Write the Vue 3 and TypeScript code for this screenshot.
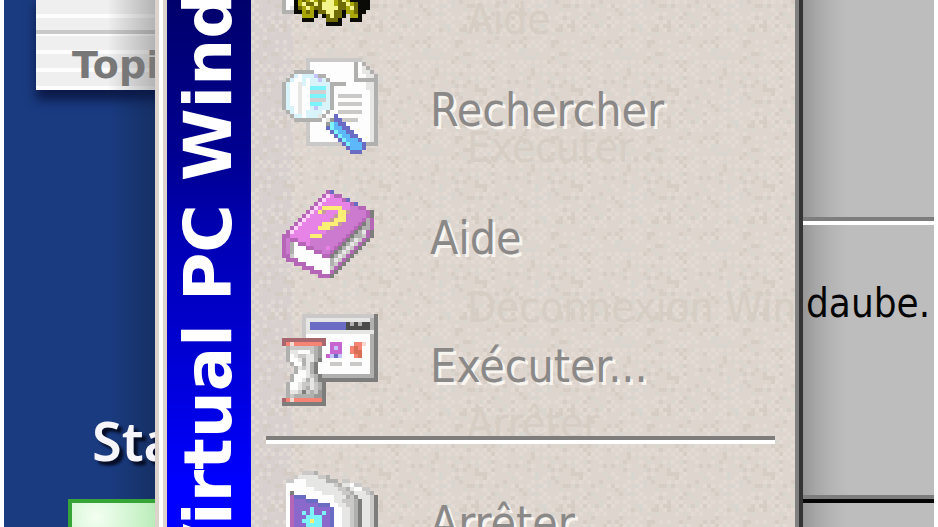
<script setup lang="ts">
interface Cell { x: number; y: number; w: number; fill: string }
interface Entry { label: string; cells: Cell[] }

const palette: Record<string, string> = {
  w: '#fdfdfd', l: '#e6e6e4', s: '#cbc9c7', g: '#b0b0ae', G: '#989896', D: '#7d7d7b', k: '#4c4c4c', K: '#0a0a06',
  c: '#d9f3fb', t: '#7df4fb', d: '#d0d0d0', p: '#c4c4fa', b: '#5cb8fa', B: '#6a6cc4', n: '#c49a9c',
  P: '#b666b6', m: '#e783e7', M: '#cb7acf', W: '#fbd3fb', y: '#fdee74', R: '#a8666e', o: '#f58474', e: '#fbd8d0',
  v: '#c765d0', x: '#d96f52', u: '#8a68cc', z: '#6f6b06', Z: '#a9a607', Y: '#f4f48c',
}

function paint(rows: string[], top = 0): Cell[] {
  const cells: Cell[] = []
  rows.forEach((row, r) => {
    let c = 0
    while (c < row.length) {
      let end = c + 1
      while (end < row.length && row[end] === row[c]) end++
      const fill = palette[row[c]]
      if (fill) cells.push({ x: c, y: r + top, w: end - c, fill })
      c = end
    }
  })
  return cells
}

const gear = paint([
  'gwwKZzZYZzZYYZzYZKKKKK..',
  'gwwKZYzzYzYYYZzzYZzKKK..',
  'gwlKzZYZzzYYYYzzZYzKKK..',
  'gggKKZzZKzzYYzzKZZzKK...',
  '.....ZZZK.KzYzzK.ZZK....',
  '.....KKK...zzzK..KKK....',
  '...........KKKK.........',
], 17)

const search = paint([
  '......ssssssssssssss....',
  '......swwwwwwwwwwwgwg...',
  '......swwwwwwwwwwwgwlg..',
  '...gggggwwwwwwwwwwgwllg.',
  '..gcwcccpggwwwwwwwgwwllg',
  '.gcwwcwccpcgwwwwwwgggggg',
  'gcwwlcwcccccggggwwwwwllg',
  'gcwwlwwttttcgwwwwwwwwllg',
  'gcwwlwwddddcgwwwwwwwwwlg',
  'gcwwlwwttttcgwsssssswwlg',
  'gcwwlwwddddcgwwwwwwwwwlg',
  'gcwwlwwtttccgwsssssswwlg',
  'gccwlwwcpcccgwwwwwwwwwlg',
  '.gcwlwccccwgwwsssssswwlg',
  '..gccwccclgwwBwwwwwwwwlg',
  '...gggggggwlGBBsssswwwlg',
  '......swwwwGtbBBwwwwwwlg',
  '......swwwwBtbbBBwwwwwlg',
  '......swwwwwBtbbBBwwwwlg',
  '......swwwwwwBtbbBBwwwlg',
  '......swwwwwwwBtbbbBwwlg',
  '......sssssssssBtbbbBggg',
  '................BbbbB...',
  '.................BBB....',
])

const book = paint([
  '...........PB',
  '..........PWmPP',
  '.........PWmmmmPB',
  '........PWmmmmmmmPB',
  '.......PWmyyyyymmMMPP',
  '......PWmynmmmyynMMMMPD',
  '.....PWmmmmmmnyyMMMMMPD',
  '....PWmmmmmmnyyyMMMMPgP',
  '...PWmmmmmyyyynMMMMPDgP',
  '..PWmmmmmyyynMMMMMPDggP',
  '.PWmmmmmmmmMMMMMMPDglPD',
  'PPmmmmmyyyMMMMMMPDggsPD',
  'PMPPmmmMMMMMMMMPDglsPD',
  'PMgwPPmMMMMMMMPDglsPD',
  'PMgwwwPPMMMmMPDglsPD',
  'PMgwwwwwPPMMPDglsPD',
  'PPswwwwwwwPPDglsPD',
  '.PPPwwwwwwwwglsPD',
  '...PPPwwwwwwgsPD',
  '.....PPPwwwwsPD',
  '.......PPPwwPD',
  '.........PPPD',
], 1)

const run = paint([
  '.....ssssssssssssssssssD',
  '.....sllllllllllllllllgD',
  '.....slBBBBBBBBBkgkgkkgD',
  '.....slBBBBBBBBBkkkkkkgD',
  '.....slllllllllllllllllD',
  '.....swwwwwwwwwwwwwwwwgD',
  'RRRRRRRRRRRwwwwwwwwwwwgD',
  'RoeoooooooRwvvvwwwooewgD',
  '.gssssssgGwwvpvwwoxowwgD',
  '.gllwwwsgGwwvvvwwoxxwwgD',
  '.gwlssllgGwvpBpwwwoxwwgD',
  '.gwwlgllgDwwwwwwwwwwwwgD',
  '..gwwglgDwwwssswwssswwgD',
  '...glslgDwwwwwwwwwwwwwgD',
  '...gwwlgDwwwwwwwwwwwwwgD',
  '..gwwwlsgDgggggggggggggD',
  '..gwwlglgDDDDDDDDDDDDDDD',
  '.gwwlsslsgD',
  '.gwwlsglsgD',
  '.gllsDsgsGD',
  '.gsgggggGGD',
  'RoeoooooooD',
  'DDDDDDDDDDD',
])

const shutdown = paint([
  '.....sssg',
  '...slllllssg',
  '.sswwwlllllggg.ss',
  '.wwwwwlllllllsgllwss',
  '.wwwwwwwllllllssglwwss',
  '.wDwwwwwwwlllllssglllsg',
  '.wPBBBwwwwwwwlllgsGlllsD',
  '.wPuuuBBBwwwwllsssgDllsD',
  '.wPuuuuuuBBBwwllssgDllsD',
  '.wPuuuutuuuuBwwllsgDllsD',
  '.wPuututuutuBwwllsgDllsD',
  '.wPuuuttttuuBwwllsgDllsD',
  '.wPuuttyttuuBwwllsgDllsD',
  '.wPuuuttttuuBwwllsgDllsD',
  '.wPuutututuuBwwllsgDllsD',
])

const entries: Entry[] = [
  { label: 'Paramètres', cells: gear },
  { label: 'Rechercher', cells: search },
  { label: 'Aide', cells: book },
  { label: 'Exécuter...', cells: run },
]
const lastEntry: Entry = { label: 'Arrêter', cells: shutdown }

/* Speckle tile: a small pseudo-random set of light and dark grains. */
const grains: { x: number; y: number; fill: string }[] = []
for (let y = 0; y < 24; y++) {
  for (let x = 0; x < 24; x++) {
    const n = Math.sin(x * 127.1 + y * 311.7) * 43758.5453
    const v = n - Math.floor(n)
    if ((x + y) % 2 === 0 && v < 0.45) grains.push({ x, y, fill: '#e4dcd5' })
    else if (v > 0.88) grains.push({ x, y, fill: '#d5ccc3' })
    else if (v > 0.8) grains.push({ x, y, fill: '#d9d5d0' })
  }
}
</script>

<template>
  <main class="screen">
    <section class="desktop">
      <div class="card"><span>Topics</span></div>
      <div class="start">
        <span class="start-label">Start</span>
        <div class="start-tile"></div>
      </div>
    </section>

    <nav class="menu">
      <div class="band"><span>Virtual PC Windows</span></div>
      <div class="panel">
        <svg class="grain" aria-hidden="true">
          <defs>
            <pattern id="speckle" width="96" height="96" patternUnits="userSpaceOnUse">
              <g transform="scale(4)" shape-rendering="crispEdges">
                <rect v-for="(g, i) in grains" :key="i" :x="g.x" :y="g.y" width="1" height="1" :fill="g.fill" />
              </g>
            </pattern>
          </defs>
          <rect width="100%" height="100%" fill="url(#speckle)" />
        </svg>
        <div class="behind" aria-hidden="true">
          <span>Aide</span>
          <span>Exécuter...</span>
          <span class="wide">Déconnexion Win</span>
          <span>Arrêter</span>
        </div>
        <ul class="list">
          <li v-for="entry in entries" :key="entry.label">
            <button type="button" class="item">
              <svg class="icon" viewBox="0 0 24 24" shape-rendering="crispEdges" aria-hidden="true">
                <rect v-for="(c, i) in entry.cells" :key="i" :x="c.x" :y="c.y" :width="c.w" height="1" :fill="c.fill" />
              </svg>
              <span>{{ entry.label }}</span>
            </button>
          </li>
          <li class="rule" role="separator"></li>
          <li>
            <button type="button" class="item">
              <svg class="icon" viewBox="0 0 24 24" shape-rendering="crispEdges" aria-hidden="true">
                <rect v-for="(c, i) in lastEntry.cells" :key="i" :x="c.x" :y="c.y" :width="c.w" height="1" :fill="c.fill" />
              </svg>
              <span>{{ lastEntry.label }}</span>
            </button>
          </li>
        </ul>
      </div>
    </nav>

    <section class="window">
      <div class="pane pane-top"></div>
      <div class="pane pane-mid"><span>daube.</span></div>
      <div class="pane pane-end"></div>
    </section>
  </main>
</template>

<style>
body { margin: 0; background: #fff; }
</style>

<style scoped>
.screen {
  display: grid;
  grid-template-columns: 151px minmax(0, 1fr) 131px;
  height: 100vh;
  padding: 0 4px;
  box-sizing: border-box;
  overflow: hidden;
  font-family: "DejaVu Sans Condensed", "DejaVu Sans", sans-serif;
}
.desktop {
  display: flex;
  flex-direction: column;
  justify-content: space-between;
  overflow: hidden;
  background: linear-gradient(90deg, #1a3b80 0 70%, #163064);
}
.card {
  height: 90px;
  margin-left: 32px;
  padding: 0 0 0 36px;
  box-sizing: border-box;
  display: flex;
  align-items: flex-end;
  background:
    linear-gradient(90deg, transparent 60%, rgba(90, 90, 90, 0.4)),
    linear-gradient(transparent 30px, #c9c9c9 30px 34px, transparent 34px),
    repeating-linear-gradient(#efefef 0 14px, #fdfdfd 14px 18px);
  box-shadow: 4px 6px 10px 4px #0c1a48;
}
.card span {
  font: bold 38px/42px "DejaVu Sans", sans-serif;
  padding-bottom: 4px;
  color: #787878;
}
.start { height: 116px; }
.start-label {
  display: block;
  height: 88px;
  padding-left: 88px;
  font: 600 54px/58px "Noto Sans", sans-serif;
  color: #f6f6fa;
  text-shadow: 4px 4px 3px #060c24;
}
.start-tile {
  height: 32px;
  margin-left: 64px;
  box-sizing: border-box;
  border: 4px solid #37a437;
  border-right: 0;
  background: radial-gradient(circle at 24px 14px, #f4fff2, #c4f0c4 50px, #93d893 100px);
}
.menu {
  display: flex;
  min-width: 0;
  overflow: hidden;
  border-left: 4px solid #ddd3cd;
  border-right: 4px solid #343434;
  background: #ddd5ce;
}
.band {
  flex: none;
  width: 84px;
  display: flex;
  flex-direction: column;
  justify-content: flex-end;
  align-items: center;
  border-left: 4px solid #ddd3cd;
  outline: 4px solid #fff;
  background: linear-gradient(#00006c, #000092 30%, #0000b4 45%, #0000d4 68%, #0000ff 92%);
  background-clip: padding-box;
  margin-left: 4px;
}
.band span {
  writing-mode: vertical-rl;
  transform: rotate(180deg);
  white-space: nowrap;
  margin-bottom: -48px;
  font: bold 66px/80px "DejaVu Sans", sans-serif;
  color: #fff;
}
.panel {
  position: relative;
  flex: 1;
  min-width: 0;
  background: linear-gradient(90deg, #d8cfcf 0 42px, #ddd5ce 42px);
  border-right: 4px solid #808080;
}
.grain {
  position: absolute;
  inset: 0;
  width: 100%;
  height: 100%;
  opacity: 0.8;
}
.behind {
  position: absolute;
  inset: 0;
  overflow: hidden;
  padding-left: 216px;
  color: #d6cdc4;
  font-size: 42px;
  line-height: 128px;
}
.behind span { display: block; height: 128px; white-space: nowrap; }
.behind span:first-child { margin-top: -44px; }
.behind .wide { padding-top: 32px; height: 116px; }
.list {
  position: relative;
  list-style: none;
  margin: -82px 0 0;
  padding: 0;
}
.item {
  display: flex;
  align-items: center;
  gap: 52px;
  width: 100%;
  height: 128px;
  padding: 0 0 0 31px;
  border: 0;
  background: none;
  color: #8b8988;
  font: inherit;
  font-size: 46px;
  text-align: left;
  text-shadow: 3px 3px 0 #f8f5f0;
}
.list li:first-child .item { text-shadow: none; }
.icon { flex: none; width: 96px; height: 96px; margin-top: -8px; }
.rule {
  height: 4px;
  margin: 6px 20px 15px 15px;
  background: #7f7d7c;
  border-bottom: 4px solid #fff;
}
.window {
  display: grid;
  grid-template-rows: 217px 282px 1fr;
  overflow: hidden;
  background: linear-gradient(90deg, #969696, #a6a6a6 12px, #b4b4b4 28px, #bdbdbd 44px);
}
.pane-mid {
  display: flex;
  flex-direction: column;
  box-sizing: border-box;
  border-top: 4px solid #7d7d7d;
  border-bottom: 4px solid #7d7d7d;
  box-shadow: inset 0 4px 0 #fff;
  padding: 58px 0 0 3px;
  font-size: 40px;
  line-height: 48px;
  color: #050505;
}
.pane-end { border-top: 4px solid #050505; }
</style>
